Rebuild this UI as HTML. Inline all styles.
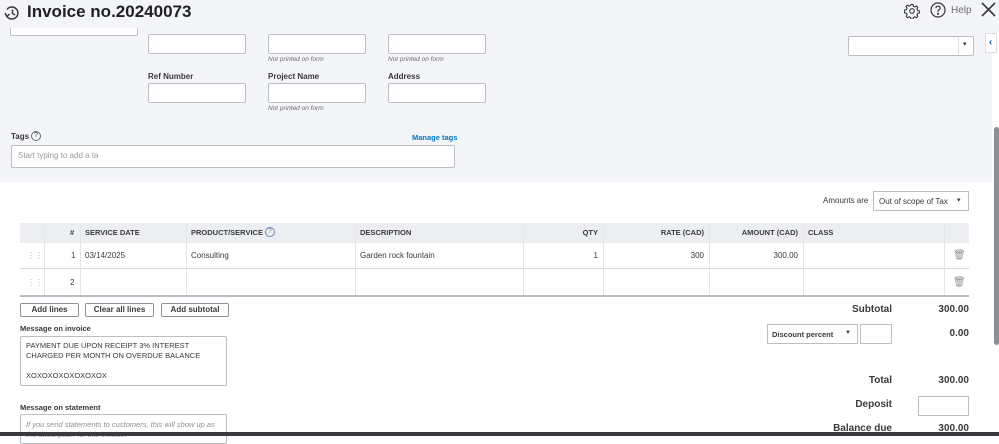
<!DOCTYPE html>
<html><head><meta charset="utf-8"><style>
*{box-sizing:border-box;margin:0;padding:0}
body{width:999px;height:436px;overflow:hidden;position:relative;background:#fff;font-family:"Liberation Sans",Arial,sans-serif;color:#393a3d}
.a{position:absolute}
.top{left:0;top:0;width:999px;height:182px;background:#f4f5f8}
.in{position:absolute;background:#fff;border:1px solid #babec5;border-radius:2px}
.lbl{position:absolute;font-size:8px;font-weight:bold;color:#393a3d}
.np{position:absolute;font-size:6.5px;font-style:italic;color:#6b6c72}
.th{position:absolute;font-size:7.5px;font-weight:bold;top:228px}
.td{position:absolute;font-size:8px;color:#393a3d}
.vl{position:absolute;width:1px;background:#e3e5e8}
.btn{position:absolute;top:303px;height:14px;border:1px solid #8d9096;border-radius:2px;font-size:8px;font-weight:bold;text-align:center;line-height:12px;background:#fff}
.r{text-align:right}
.tot{position:absolute;font-size:10px;font-weight:bold;text-align:right}
</style></head><body>
<div class="a top"></div>
<svg class="a" style="left:3px;top:4px" width="18" height="18" viewBox="0 0 18 18" fill="none" stroke="#393a3d" stroke-width="1.5"><path d="M4 5.5 A6 6 0 1 1 4 12.5"/><path d="M2 9 L4 12.5 L6.5 10"/><path d="M9.5 5.5 V9.5 L12 11"/></svg>
<div class="a" style="left:27px;top:2px;font-size:17px;font-weight:bold;color:#1f2024">Invoice no.20240073</div>
<svg class="a" style="left:904px;top:3px" width="16" height="16" viewBox="0 0 16 16" fill="none" stroke="#393a3d" stroke-width="1.1"><circle cx="8" cy="8" r="2.3"/><path d="M7 1.5h2l.4 1.8 1.5.7 1.6-1 1.4 1.4-1 1.6.7 1.5 1.8.4v2l-1.8.4-.7 1.5 1 1.6-1.4 1.4-1.6-1-1.5.7-.4 1.8H7l-.4-1.8-1.5-.7-1.6 1-1.4-1.4 1-1.6-.7-1.5-1.8-.4V7l1.8-.4.7-1.5-1-1.6 1.4-1.4 1.6 1 1.5-.7z"/></svg>
<svg class="a" style="left:930px;top:2px" width="16" height="16" viewBox="0 0 16 16" fill="none" stroke="#393a3d" stroke-width="1.2"><circle cx="8" cy="8" r="7"/><path d="M6 6.2a2 2 0 1 1 2.6 1.9c-.5.2-.6.6-.6 1.2v.6"/><circle cx="8" cy="11.8" r=".5" fill="#393a3d"/></svg>
<div class="a" style="left:951px;top:5px;font-size:10px;color:#6b6c72">Help</div>
<svg class="a" style="left:981px;top:2px" width="15" height="15" viewBox="0 0 15 15" stroke="#393a3d" stroke-width="1.6"><path d="M1 1L14 14M14 1L1 14"/></svg>
<div class="a" style="left:992px;top:33px;width:7px;height:400px;background:#fff"></div>
<div class="a" style="left:985px;top:33px;width:12px;height:20px;background:#fff;border:1px solid #dcdee2"></div>
<div class="a" style="left:989px;top:37px;font-size:10px;font-weight:bold;color:#0d5fb8">&lsaquo;</div>
<div class="a" style="left:994px;top:127px;width:5px;height:218px;background:#8d9096;border-radius:3px"></div>
<div class="in" style="left:10px;top:28px;width:128px;height:8px;border-top:none"></div>
<div class="in" style="left:148px;top:34px;width:98px;height:20px"></div>
<div class="in" style="left:268px;top:34px;width:98px;height:20px"></div>
<div class="in" style="left:388px;top:34px;width:98px;height:20px"></div>
<div class="np" style="left:268px;top:56px">Not printed on form</div>
<div class="np" style="left:388px;top:56px">Not printed on form</div>
<div class="lbl" style="left:148px;top:72px">Ref Number</div>
<div class="lbl" style="left:268px;top:72px">Project Name</div>
<div class="lbl" style="left:388px;top:72px">Address</div>
<div class="in" style="left:148px;top:83px;width:98px;height:20px"></div>
<div class="in" style="left:268px;top:83px;width:98px;height:20px"></div>
<div class="in" style="left:388px;top:83px;width:98px;height:20px"></div>
<div class="np" style="left:268px;top:105px">Not printed on form</div>
<div class="in" style="left:848px;top:36px;width:126px;height:20px"></div>
<div class="a" style="left:958px;top:37px;width:1px;height:18px;background:#dcdee2"></div>
<div class="a" style="left:963px;top:40px;font-size:7px">&#9662;</div>
<div class="lbl" style="left:11px;top:132px">Tags</div>
<div class="a" style="left:31px;top:131px;width:10px;height:10px;border:1px solid #6b6c72;border-radius:50%;font-size:7px;text-align:center;line-height:8px">?</div>
<div class="a" style="left:412px;top:133px;font-size:7.5px;font-weight:bold;color:#0077c5">Manage tags</div>
<div class="in" style="left:11px;top:145px;width:444px;height:23px"></div>
<div class="a" style="left:18px;top:151px;font-size:8px;color:#9a9ba0">Start typing to add a ta</div>
<div class="a" style="left:823px;top:196px;font-size:8px">Amounts are</div>
<div class="in" style="left:873px;top:191px;width:96px;height:20px;border-radius:0"></div>
<div class="a" style="left:879px;top:197px;font-size:8px">Out of scope of Tax</div>
<div class="a" style="left:957px;top:196px;font-size:7px">&#9662;</div>
<div class="a" style="left:20px;top:223px;width:949px;height:20px;background:#eceef1"></div>
<div class="a" style="left:20px;top:268px;width:949px;height:1px;background:#d4d7dc"></div>
<div class="a" style="left:20px;top:295px;width:949px;height:2px;background:#babec5"></div>
<div class="vl" style="left:44px;top:223px;height:72px"></div>
<div class="vl" style="left:80px;top:223px;height:72px"></div>
<div class="vl" style="left:186px;top:223px;height:72px"></div>
<div class="vl" style="left:355px;top:223px;height:72px"></div>
<div class="vl" style="left:523px;top:223px;height:72px"></div>
<div class="vl" style="left:603px;top:223px;height:72px"></div>
<div class="vl" style="left:709px;top:223px;height:72px"></div>
<div class="vl" style="left:803px;top:223px;height:72px"></div>
<div class="vl" style="left:944px;top:223px;height:72px"></div>
<div class="th" style="left:70px">#</div>
<div class="th" style="left:85px">SERVICE DATE</div>
<div class="th" style="left:191px">PRODUCT/SERVICE</div>
<div class="a" style="left:265px;top:227px;width:10px;height:10px;border:1px solid #6b8ab0;border-radius:50%;font-size:7px;text-align:center;line-height:8px;color:#6b8ab0">?</div>
<div class="th" style="left:360px">DESCRIPTION</div>
<div class="th r" style="left:560px;width:38px">QTY</div>
<div class="th r" style="left:620px;width:84px">RATE (CAD)</div>
<div class="th r" style="left:720px;width:78px">AMOUNT (CAD)</div>
<div class="th" style="left:808px">CLASS</div>
<div class="td" style="left:27px;top:251px;font-size:8px;color:#aaa">&#8942;&#8942;</div>
<div class="td" style="left:27px;top:278px;font-size:8px;color:#aaa">&#8942;&#8942;</div>
<div class="td" style="left:71px;top:251px">1</div>
<div class="td" style="left:70px;top:278px">2</div>
<div class="td" style="left:85px;top:251px">03/14/2025</div>
<div class="td" style="left:191px;top:251px">Consulting</div>
<div class="td" style="left:360px;top:251px">Garden rock fountain</div>
<div class="td r" style="left:560px;top:251px;width:38px">1</div>
<div class="td r" style="left:620px;top:251px;width:84px">300</div>
<div class="td r" style="left:720px;top:251px;width:78px">300.00</div>
<div class="td" style="left:953px;top:250px;color:#8d9096;font-size:10px">&#128465;</div>
<div class="td" style="left:953px;top:277px;color:#8d9096;font-size:10px">&#128465;</div>
<div class="btn" style="left:20px;width:59px">Add lines</div>
<div class="btn" style="left:85px;width:69px">Clear all lines</div>
<div class="btn" style="left:161px;width:68px">Add subtotal</div>
<div class="lbl" style="left:20px;top:324px;font-size:7.5px">Message on invoice</div>
<div class="in" style="left:20px;top:336px;width:207px;height:50px"></div>
<div class="a" style="left:26px;top:341px;font-size:7.5px;line-height:10px">PAYMENT DUE UPON RECEIPT 3% INTEREST<br>CHARGED PER MONTH ON OVERDUE BALANCE<br><br>XOXOXOXOXOXOXOX</div>
<div class="lbl" style="left:20px;top:403px;font-size:7.5px">Message on statement</div>
<div class="in" style="left:20px;top:414px;width:207px;height:30px"></div>
<div class="a" style="left:26px;top:420px;font-size:7.5px;font-style:italic;color:#8d9096;line-height:10px">If you send statements to customers, this will show up as<br>the description for this invoice.</div>
<div class="tot" style="left:800px;top:304px;width:92px">Subtotal</div>
<div class="tot" style="left:900px;top:304px;width:69px">300.00</div>
<div class="in" style="left:767px;top:324px;width:91px;height:20px;border-radius:0"></div>
<div class="a" style="left:772px;top:330px;font-size:7.5px;font-weight:bold">Discount percent</div>
<div class="a" style="left:845px;top:330px;font-size:6px">&#9660;</div>
<div class="in" style="left:860px;top:324px;width:32px;height:20px;border-radius:0"></div>
<div class="tot" style="left:900px;top:328px;width:69px">0.00</div>
<div class="tot" style="left:800px;top:375px;width:92px">Total</div>
<div class="tot" style="left:900px;top:375px;width:69px">300.00</div>
<div class="tot" style="left:800px;top:399px;width:92px">Deposit</div>
<div class="in" style="left:918px;top:396px;width:51px;height:20px;border-radius:0"></div>
<div class="tot" style="left:800px;top:423px;width:92px">Balance due</div>
<div class="tot" style="left:900px;top:423px;width:69px">300.00</div>
<div class="a" style="left:0;top:432px;width:999px;height:4px;background:#3a3b3e"></div>
</body></html>
